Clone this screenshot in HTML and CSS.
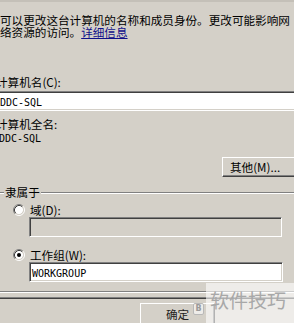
FILE: index.html
```html
<!DOCTYPE html>
<html lang="zh-CN">
<head>
    <meta charset="UTF-8">
    <meta name="viewport" content="width=device-width, initial-scale=1.0">
    <title>计算机名</title>
    <link rel="stylesheet" href="styles.css">
</head>
<body>
    <div class="page">
        <div class="top-edge"></div>

        <p class="intro">可以更改这台计算机的名称和成员身份。更改可能影响网<br>络资源的访问。<a class="link" href="#">详细信息</a></p>

        <div class="label label-name">计算机名(C):</div>
        <div class="textbox textbox-name"><span class="mono">DDC-SQL</span></div>

        <div class="label label-full">计算机全名:</div>
        <div class="value mono">DDC-SQL</div>

        <div class="more-row">
            <button class="btn btn-more">其他(M)...</button>
        </div>

        <div class="group">
            <div class="group-head"><span class="group-title">隶属于</span></div>

            <div class="radio-row radio-domain">
                <svg class="radio" width="12" height="12" viewBox="0 0 12 12">
                    <circle cx="6" cy="6" r="4.2" fill="#fff"/>
                    <path d="M2.11 9.89A5.5 5.5 0 0 1 9.89 2.11" fill="none" stroke="#808080"/>
                    <path d="M9.89 2.11A5.5 5.5 0 0 1 2.11 9.89" fill="none" stroke="#fff"/>
                    <path d="M2.82 9.18A4.5 4.5 0 0 1 9.18 2.82" fill="none" stroke="#404040"/>
                    <path d="M9.18 2.82A4.5 4.5 0 0 1 2.82 9.18" fill="none" stroke="#d4d0c8"/>
                </svg>
                <span>域(D):</span>
            </div>
            <div class="textbox textbox-domain disabled"></div>

            <div class="radio-row radio-work">
                <svg class="radio" width="12" height="12" viewBox="0 0 12 12">
                    <circle cx="6" cy="6" r="4.2" fill="#fff"/>
                    <path d="M2.11 9.89A5.5 5.5 0 0 1 9.89 2.11" fill="none" stroke="#808080"/>
                    <path d="M9.89 2.11A5.5 5.5 0 0 1 2.11 9.89" fill="none" stroke="#fff"/>
                    <path d="M2.82 9.18A4.5 4.5 0 0 1 9.18 2.82" fill="none" stroke="#404040"/>
                    <path d="M9.18 2.82A4.5 4.5 0 0 1 2.82 9.18" fill="none" stroke="#d4d0c8"/>
                    <circle cx="6" cy="6" r="2" fill="#000"/>
                </svg>
                <span>工作组(W):</span>
            </div>
            <div class="textbox textbox-work"><span class="mono">WORKGROUP</span></div>

            <div class="group-bottom"></div>
        </div>

        <div class="tab-bottom"></div>

        <div class="buttons">
            <button class="btn btn-ok">确定</button>
        </div>

        <!-- watermark over the corner -->
        <div class="watermark">
            <span class="wm-logo">B</span>
            <span class="wm-text">软件技巧</span>
        </div>
    </div>
</body>
</html>
```

FILE: styles.css
```css
body {
    margin: 0;
    width: 294px;
    height: 323px;
    overflow: hidden;
    background: #d4d0c8;
    font-family: "Noto Sans CJK SC", "Noto Sans", sans-serif;
    font-size: 11.6px;
    color: #000;
}

.page {
    position: relative;
    width: 294px;
    height: 323px;
    overflow: hidden;
}

.top-edge {
    height: 2px;
    background: #c4c0b8;
}

.intro {
    margin: 12px 0 0 0;
    line-height: 12px;
    height: 24px;
    white-space: nowrap;
}

.link {
    color: #10108a;
    text-decoration: underline;
}

.label {
    height: 13px;
    line-height: 13px;
    margin-left: -4px;
    white-space: nowrap;
}

.label-name {
    margin-top: 38px;
}

.label-full {
    margin-top: 7px;
}

.mono {
    font-family: "DejaVu Sans Mono", "Liberation Mono", monospace;
    font-size: 10px;
}

.value {
    margin-top: 2px;
    margin-left: -1px;
    height: 12px;
    line-height: 12px;
}

.textbox {
    box-sizing: border-box;
    height: 20px;
    line-height: 18px;
    background: #fff;
    border-top: 1px solid #808080;
    border-left: 1px solid #808080;
    border-bottom: 1px solid #fff;
    border-right: 1px solid #fff;
    box-shadow: inset 1px 1px 0 #404040, inset -1px -1px 0 #d4d0c8;
    white-space: nowrap;
    overflow: hidden;
}

.textbox-name {
    margin-top: 2px;
    margin-left: -10px;
    width: 320px;
    padding-left: 9px;
}

.textbox-domain {
    margin-top: 1px;
    margin-left: 29px;
    width: 253px;
}

.textbox-work {
    margin-top: 1px;
    margin-left: 29px;
    width: 254px;
    padding-left: 2px;
}

.textbox.disabled {
    background: #d4d0c8;
}

.btn {
    box-sizing: border-box;
    font-family: "Noto Sans CJK SC", "Noto Sans", sans-serif;
    font-size: 11.6px;
    color: #000;
    background: #d4d0c8;
    border-top: 1px solid #fff;
    border-left: 1px solid #fff;
    border-bottom: 1px solid #404040;
    border-right: 1px solid #404040;
    box-shadow: inset -1px -1px 0 #808080;
    padding: 0;
    margin: 0;
}

.more-row {
    margin-top: 12px;
    display: flex;
    justify-content: flex-end;
    margin-right: -8px;
}

.btn-more {
    width: 80px;
    height: 20px;
    line-height: 18px;
    text-align: left;
    padding-left: 7px;
}

.group-head {
    margin-top: 9px;
    height: 13px;
    display: flex;
    align-items: center;
}

.group-head::before,
.group-head::after {
    content: "";
    height: 0;
    border-top: 1px solid #808080;
    border-bottom: 1px solid #fff;
}

.group-head::before {
    width: 4px;
}

.group-head::after {
    flex: 1;
}

.group-title {
    line-height: 13px;
    padding: 0 1px;
}

.radio-row {
    height: 13px;
    display: flex;
    align-items: center;
    gap: 5px;
    padding-left: 13px;
    white-space: nowrap;
}

.radio-domain {
    margin-top: 4px;
}

.radio-work {
    margin-top: 11px;
}

.group-bottom {
    margin-top: 9px;
    height: 0;
    border-top: 1px solid #808080;
    border-bottom: 1px solid #fff;
}

.tab-bottom {
    margin-top: 4px;
    height: 0;
    border-top: 1px solid #808080;
    border-bottom: 1px solid #404040;
}

.buttons {
    margin-top: 4px;
    padding-left: 140px;
}

.btn-ok {
    width: 75px;
    height: 23px;
    line-height: 21px;
    color: #222;
}

.watermark {
    position: absolute;
    left: 193px;
    top: 283px;
    right: 0;
    bottom: 0;
    display: flex;
    align-items: center;
    gap: 2px;
}

.wm-logo {
    box-sizing: border-box;
    width: 11px;
    height: 12px;
    margin-top: 12px;
    border: 1px solid #b8b8b8;
    border-radius: 2px;
    background: rgba(255, 255, 255, 0.6);
    color: #9a9a9a;
    font-family: "DejaVu Sans", sans-serif;
    font-size: 8px;
    font-weight: bold;
    line-height: 10px;
    text-align: center;
}

.wm-text {
    align-self: stretch;
    flex: 1;
    padding-left: 4px;
    padding-top: 6px;
    background: rgba(255, 255, 255, 0.6);
    color: #a8a8a8;
    font-size: 19px;
    line-height: 22px;
    white-space: nowrap;
}
```
